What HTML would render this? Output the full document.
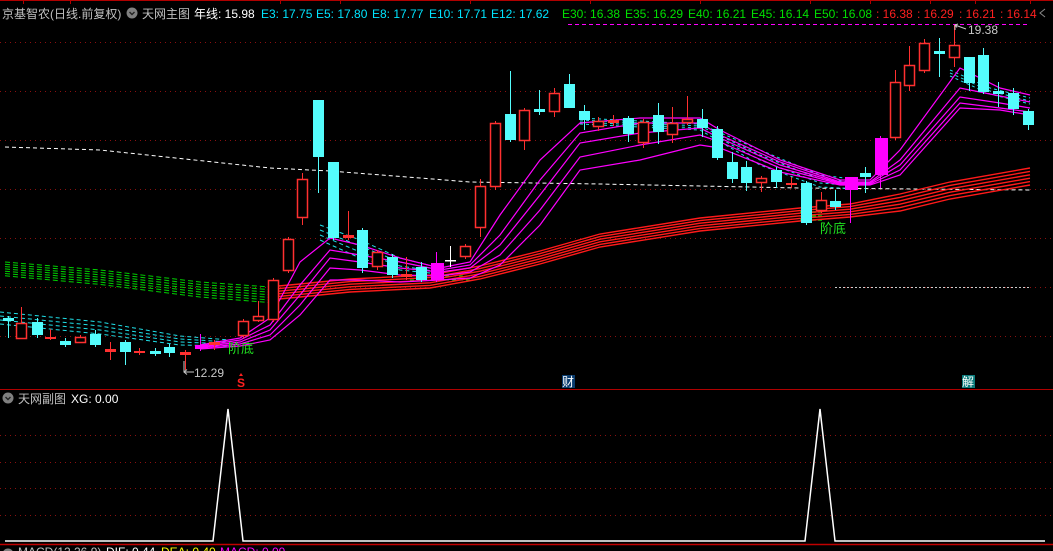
<!DOCTYPE html>
<html><head><meta charset="utf-8"><style>
html,body{margin:0;padding:0;background:#000;overflow:hidden}
svg{display:block}
text{font-family:"Liberation Sans","Noto Sans CJK SC",sans-serif}
</style></head><body>
<svg id="s" width="1053" height="551" viewBox="0 0 1053 551" xmlns="http://www.w3.org/2000/svg">
<rect width="1053" height="551" fill="#000"/>
<g id="grid"></g>
<g id="bands"></g>
<g id="cands"></g>
<g id="labels" font-size="12">
<text x="2" y="18" fill="#c0c0c0">京基智农(日线.前复权)</text>
<circle cx="132" cy="13" r="5.5" fill="#808080"/>
<path d="M129.5 12 L132 14.5 L134.5 12" stroke="#222" stroke-width="1.4" fill="none"/>
<text x="142" y="18" fill="#c0c0c0">天网主图</text>
<text x="194" y="18" fill="#fff">年线: 15.98</text>
<text x="261" y="18" fill="#00e5ff">E3: 17.75</text>
<text x="316" y="18" fill="#00e5ff">E5: 17.80</text>
<text x="372" y="18" fill="#00e5ff">E8: 17.77</text>
<text x="429" y="18" fill="#00e5ff">E10: 17.71</text>
<text x="491" y="18" fill="#00e5ff">E12: 17.62</text>
<text x="562" y="18" fill="#00e000">E30: 16.38</text>
<text x="625" y="18" fill="#00e000">E35: 16.29</text>
<text x="688" y="18" fill="#00e000">E40: 16.21</text>
<text x="751" y="18" fill="#00e000">E45: 16.14</text>
<text x="814" y="18" fill="#00e000">E50: 16.08</text>
<text x="876" y="18" fill="#ff2020">: 16.38</text>
<text x="917" y="18" fill="#ff2020">: 16.29</text>
<text x="959" y="18" fill="#ff2020">: 16.21</text>
<text x="1000" y="18" fill="#ff2020">: 16.14</text>
<path d="M1045 9 L1040 13 L1045 17" stroke="#888" fill="none"/>
<text x="228" y="353" font-size="13" fill="#20e020">阶底</text>
<text x="820" y="233" font-size="13" fill="#20e020">阶底</text>
<text x="194" y="377" fill="#c8c8c8">12.29</text>
<path d="M184 361 L184 372 L194 372 M184 372 L187 369.5 M184 372 L187 374.5" stroke="#c8c8c8" fill="none"/>
<text x="968" y="34" fill="#c8c8c8">19.38</text>
<path d="M955 25 L955 30 M955 25 L966 29 M955 25 L958 24 M955 25 L957 27.5" stroke="#c8c8c8" fill="none"/>
<text x="237" y="387" fill="#ff2020" font-weight="bold">S</text>
<path d="M239 376 L241 373 L243 376 Z" fill="#ff2020"/>
<rect x="562" y="375" width="13" height="13" fill="#0a3c6e"/>
<text x="562" y="386" fill="#fff">财</text>
<rect x="962" y="375" width="13" height="13" fill="#0a7a7a"/>
<text x="962" y="386" fill="#fff">解</text>
<circle cx="8" cy="398" r="5.5" fill="#808080"/>
<path d="M5.5 397 L8 399.5 L10.5 397" stroke="#222" stroke-width="1.4" fill="none"/>
<text x="18" y="403" fill="#c0c0c0">天网副图</text>
<text x="71" y="403" fill="#fff">XG: 0.00</text>
<circle cx="8" cy="554" r="5.5" fill="#808080"/>
<text x="18" y="556" fill="#c0c0c0">MACD(12,26,9)</text>
<text x="106" y="556" fill="#fff">DIF: 0.44</text>
<text x="161" y="556" fill="#ffff00">DEA: 0.40</text>
<text x="220" y="556" fill="#ff00ff">MACD: 0.09</text>
</g>
</svg>
<script>
var NS="http://www.w3.org/2000/svg";
function el(p,t,a){var e=document.createElementNS(NS,t);for(var k in a)e.setAttribute(k,a[k]);document.getElementById(p).appendChild(e);return e;}
el('grid','line',{x1:0,y1:0.5,x2:1053,y2:0.5,stroke:'#b00000'});
[23,70,280,340,470,590,700,810,870,930,975,1030].forEach(function(x){el('grid','line',{x1:x+.5,y1:0,x2:x+.5,y2:4,stroke:'#b00000'});});
el('grid','line',{x1:0,y1:389.5,x2:1053,y2:389.5,stroke:'#b00000'});
el('grid','line',{x1:0,y1:544.5,x2:1053,y2:544.5,stroke:'#c00000','stroke-width':1.5});
[42,91,140,189,238,287,336,435,462,488,515].forEach(function(y){el('grid','line',{x1:0,y1:y+.5,x2:1053,y2:y+.5,stroke:'#8a1010','stroke-dasharray':'1 4'});});
function interp(xs,ys){var pts=[];for(var i=0;i<xs.length;i++)pts.push(xs[i]+','+ys[i]);return pts.join(' ');}
for(var i=0;i<7;i++){el('bands','polyline',{points:interp([5,100,200,270],[262+i*2.3,270+i*2.4,282+i*2.5,287+i*2.6]),stroke:'#00d000',fill:'none','stroke-dasharray':'5 3'});}
for(var i=0;i<3;i++){el('bands','line',{x1:800,y1:212+i*4,x2:822,y2:212+i*4,stroke:'#00d000','stroke-dasharray':'4 2','stroke-width':1.5});}
for(var i=0;i<2;i++){el('bands','line',{x1:410,y1:276+i*4,x2:470,y2:276+i*4,stroke:'#00d000','stroke-dasharray':'4 3'});}
el('bands','polyline',{points:interp([5,100,270,330,420,470,600,700,800,1030],[147,150,168,171,178,182,184,186,188,190]),stroke:'#fff',fill:'none','stroke-dasharray':'4 3'});
el('bands','line',{x1:568,y1:24.5,x2:1030,y2:24.5,stroke:'#ff00ff','stroke-dasharray':'4 3'});
el('bands','line',{x1:835,y1:287.5,x2:1030,y2:287.5,stroke:'#ccc','stroke-dasharray':'2 2'});
var rx=[268,300,350,430,480,540,600,700,800,850,900,950,1030];
var rc=[293,290,285,281,272,257,240,224,214,210,202,190,176];
for(var i=0;i<6;i++){el('bands','polyline',{points:interp(rx,rc.map(function(v,j){return v-6+i*2.6+(j>9?(i-2.5)*0.8:0);})),stroke:'#ff1a1a',fill:'none','stroke-width':1.4});}
var cyx=[0,100,180,230];
for(var i=0;i<4;i++){el('bands','polyline',{points:interp(cyx,[312+i*4,322+i*4,336+i*3,340+i*2]),stroke:'#20e0e8',fill:'none','stroke-dasharray':'4 3'});}
for(var i=0;i<4;i++){el('bands','polyline',{points:interp([320,360,400,440],[225+i*5,240+i*6,258+i*4,268+i*2]),stroke:'#20e0e8',fill:'none','stroke-dasharray':'4 3'});}
for(var i=0;i<4;i++){el('bands','polyline',{points:interp([580,700,760,820,860],[118+i*2,124+i*2,150+i*5,175+i*4,180+i*3]),stroke:'#20e0e8',fill:'none','stroke-dasharray':'3 3'});}
for(var i=0;i<3;i++){el('bands','polyline',{points:interp([950,990,1030],[70+i*3,88+i*3,98+i*3]),stroke:'#20e0e8',fill:'none','stroke-dasharray':'3 3'});}
var mx=[200,240,270,300,330,360,400,440,470,500,540,580,640,700,720,780,840,870,900,960,1000,1030];
var M=[
[345,338,318,262,238,245,258,268,262,215,160,123,118,118,130,160,180,180,150,68,88,95],
[346,340,325,285,250,255,262,270,265,235,180,133,123,123,135,162,182,182,160,88,96,102],
[347,342,330,295,258,262,268,272,268,245,195,143,133,128,138,165,183,183,165,97,103,108],
[348,344,335,305,268,270,275,276,272,255,210,157,145,135,142,168,184,184,170,103,108,112],
[349,346,340,315,280,280,282,280,278,265,225,170,160,145,148,172,185,185,175,108,110,115]];
M.forEach(function(l){el('bands','polyline',{points:interp(mx,l),stroke:'#ff00ff',fill:'none','stroke-width':1.2});});
var C=[
[8,318,321,316,338,'c'],[21,323,339,307,339,'r'],[37,322,335,318,338,'c'],[50,337,339,329,340,'r'],[65,341,345,338,347,'c'],
[80,337,343,335,343,'r'],[95,334,345,330,347,'c'],[110,349,352,342,360,'r'],[125,342,352,340,365,'c'],[139,351,353,348,355,'r'],
[155,351,353,348,356,'c'],[169,347,353,344,357,'c'],[185,352,355,350,370,'r'],[200,345,349,334,351,'m'],[214,342,345,340,350,'r'],
[243,321,336,319,338,'r'],[258,316,321,301,322,'r'],[273,280,320,278,322,'r'],[288,239,271,237,273,'r'],[302,179,218,173,225,'r'],
[318,100,157,100,193,'c'],[333,162,238,162,240,'c'],[348,235,238,211,240,'r'],[362,230,268,228,273,'c'],[377,252,267,250,270,'r'],
[392,257,275,254,278,'c'],[406,274,277,257,280,'r'],[421,267,280,262,282,'c'],[436,263,280,252,282,'m'],[450,260,260,246,267,'w'],
[465,246,257,244,259,'r'],[480,186,228,179,237,'r'],[495,123,187,121,190,'r'],[510,114,140,71,142,'c'],[524,110,141,108,150,'r'],
[539,109,109,90,115,'c'],[554,93,112,88,117,'r'],[569,84,108,74,108,'c'],[584,111,120,105,130,'c'],[598,121,127,117,131,'r'],
[613,120,123,115,126,'r'],[628,118,134,116,142,'c'],[643,122,143,119,148,'r'],[658,115,132,103,144,'c'],[672,123,135,107,143,'r'],
[687,119,123,96,125,'r'],[702,119,128,109,137,'c'],[717,129,158,126,160,'c'],[732,162,179,152,183,'c'],[746,167,183,161,191,'c'],
[761,178,183,176,192,'r'],[776,170,182,167,188,'c'],[791,183,183,177,188,'r'],[806,183,223,181,225,'c'],[821,200,211,192,213,'r'],
[835,201,207,190,210,'c'],[850,177,190,177,223,'m'],[865,173,177,167,193,'c'],[880,138,175,136,188,'m'],[895,82,138,70,140,'r'],
[909,65,86,46,91,'r'],[924,43,71,39,73,'r'],[939,51,54,38,77,'c'],[954,45,58,25,67,'r'],[969,57,83,57,91,'c'],
[983,55,92,48,94,'c'],[998,91,93,82,107,'c'],[1013,93,109,88,115,'c'],[1028,111,125,109,130,'c']];
var col={r:'#ff3030',c:'#54fcfc',m:'#ff00ff',w:'#ffffff'};
C.forEach(function(d){var x=d[0],c=col[d[5]],w=11;
 el('cands','line',{x1:x+.5,y1:d[3],x2:x+.5,y2:d[4],stroke:c});
 var h=Math.max(d[2]-d[1],1);
 if(d[5]=='r'){
   if(h<=3){el('cands','rect',{x:x-5,y:d[1],width:w,height:Math.max(h,2),fill:c});}
   else{el('cands','rect',{x:x-5+.5,y:d[1]+.5,width:w-1,height:h-1,fill:'#000',stroke:c,'stroke-width':1.5});}
 } else if(d[5]=='w'){el('cands','rect',{x:x-5,y:d[1],width:w,height:1.5,fill:c});}
 else {el('cands','rect',{x:x-5,y:d[1],width:w+(d[5]=='m'?2:0),height:Math.max(h,3),fill:c});}
});
el('cands','polyline',{points:'5,541 213,541 228,409 243,541 805,541 820,409 835,541 1045,541',stroke:'#fff',fill:'none','stroke-width':1.5});
</script>
</body></html>
